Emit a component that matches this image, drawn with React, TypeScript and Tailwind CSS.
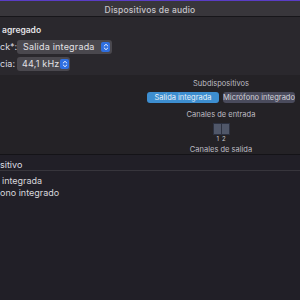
const Stepper = () => (
  <span className="flex h-[10px] w-[9px] items-center justify-center rounded-[2px] bg-[#2f6fe0]">
    <svg width="6" height="8" viewBox="0 0 6 8" fill="none">
      <path d="M1.2 3L3 1.3 4.8 3M1.2 5L3 6.7 4.8 5" stroke="#ffffff" strokeWidth="0.9" strokeLinecap="round" strokeLinejoin="round" />
    </svg>
  </span>
);

export default function App() {
  return (
    <div className="flex h-[300px] w-[300px] flex-col overflow-hidden bg-[#211f27] font-['Inter',sans-serif] text-[#dcdbe0]">
      <div className="h-[1px] bg-[#5a3dc6]" />
      <div className="flex h-[16px] items-center justify-center border-b border-[#17161a] bg-[#38363b] pt-[3px] text-[8.5px] font-medium tracking-[0.2px] text-[#c6c4c9]">
        Dispositivos de audio
      </div>

      <div className="flex h-[58px] flex-col bg-[#2a282d] pl-[2px] pt-[7px]">
        <p className="text-[8.5px] font-semibold leading-[12px] text-[#e4e3e7]">agregado</p>
        <div className="mt-[4px] flex items-center">
          <span className="-ml-[2px] w-[17px] text-[9px]">ck*:</span>
          <div className="flex h-[14px] w-[95px] items-center justify-between rounded-[3px] bg-[#4a484e] pl-[6px] pr-[2px] text-[9px] tracking-[0.2px] text-[#e2e1e5]">
            <span>Salida integrada</span>
            <Stepper />
          </div>
        </div>
        <div className="mt-[3px] flex items-center">
          <span className="-ml-[2px] w-[17px] text-[9px]">cia:</span>
          <div className="flex h-[14px] w-[53px] items-center justify-between rounded-[3px] bg-[#4a484e] pl-[5px] pr-[1px] text-[9px] tracking-[0.2px] text-[#e2e1e5]">
            <span>44,1 kHz</span>
            <Stepper />
          </div>
        </div>
      </div>

      <div className="flex h-[79px] flex-col items-end bg-[#242226] pr-[5px]">
        <div className="flex w-[148px] flex-col items-center text-[7.5px] text-[#bdbcc2]">
          <p className="mt-[4px] leading-[9px]">Subdispositivos</p>
          <div className="mt-[4px] flex gap-[4px]">
            <span className="flex h-[11px] w-[72px] items-center justify-center rounded-[3px] bg-[#3d8ed0] text-[#e8f0f8]">Salida integrada</span>
            <span className="flex h-[11px] w-[72px] items-center justify-center rounded-[3px] bg-[#4a4b5c] text-[#d2d2da]">Micrófono integrado</span>
          </div>
          <p className="mt-[7px] leading-[9px]">Canales de entrada</p>
          <div className="mt-[4px] flex h-[12px] border border-[#2c3140]">
            <span className="w-[7px] bg-[#505769]" />
            <span className="w-px bg-[#2c3140]" />
            <span className="w-[7px] bg-[#505769]" />
          </div>
          <div className="flex gap-[3px] text-[6px] leading-[8px] text-[#c8c8cc]">
            <span>1</span>
            <span>2</span>
          </div>
          <p className="mt-[2px] leading-[9px]">Canales de salida</p>
        </div>
      </div>

      <div className="border-t border-[#141317]">
        <div className="flex h-[16px] items-center border-b border-[#37353c] pt-[5px] text-[9px] text-[#dedde2]">sitivo</div>
        <div className="flex flex-col pt-[4px] text-[9px] leading-[12px] text-[#d8d7dc]">
          <span className="pl-[2px]">integrada</span>
          <span>ono integrado</span>
        </div>
      </div>
    </div>
  );
}
